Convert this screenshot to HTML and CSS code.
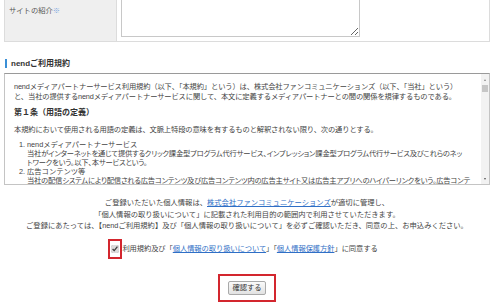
FILE: index.html
```html
<!DOCTYPE html>
<html lang="ja">
<head>
  <meta charset="UTF-8">
  <title>nendご利用規約</title>
  <link rel="stylesheet" href="styles.css">
</head>
<body>
<div class="page">

  <table class="formTable">
    <tr>
      <th>サイトの紹介<span class="req">※</span></th>
      <td><textarea class="siteText"></textarea></td>
    </tr>
  </table>

  <h2 class="sectionTitle">nendご利用規約</h2>

  <div class="termsBox">
    <div class="termsText">
      <p>nendメディアパートナーサービス利用規約（以下、「本規約」という）は、株式会社ファンコミュニケーションズ（以下、「当社」という）<br>と、当社の提供するnendメディアパートナーサービスに関して、本文に定義するメディアパートナーとの間の関係を規律するものである。</p>
      <h3>第１条（用語の定義）</h3>
      <p>本規約において使用される用語の定義は、文脈上特段の意味を有するものと解釈されない限り、次の通りとする。</p>
      <ol>
        <li>nendメディアパートナーサービス<br>
          <span class="desc">当社がインターネットを通じて提供するクリック課金型プログラム代行サービス、インプレッション課金型プログラム代行サービス及びこれらのネッ<br>トワークをいう。以下、本サービスという。</span></li>
        <li>広告コンテンツ等<br>
          <span class="desc">当社の配信システムにより配信される広告コンテンツ及び広告コンテンツ内の広告主サイト又は広告主アプリへのハイパーリンクをいう。広告コンテ<br>ンツ等には、テキスト、画像、動画等を含むものとする。</span></li>
      </ol>
    </div>
    <!-- 見た目だけのスクロールバー -->
    <div class="scrollBar">
      <span class="arrowUp"></span>
      <span class="thumb"></span>
      <span class="track"></span>
      <span class="arrowDown"></span>
    </div>
  </div>

  <div class="notice">
    <p>ご登録いただいた個人情報は、<a href="#">株式会社ファンコミュニケーションズ</a>が適切に管理し、</p>
    <p>「個人情報の取り扱いについて」に記載された利用目的の範囲内で利用させていただきます。</p>
    <p>ご登録にあたっては、【nendご利用規約】及び「個人情報の取り扱いについて」を必ずご確認いただき、同意の上、お申込みください。</p>
  </div>

  <div class="agree">
    <span class="mark"><input type="checkbox" checked></span>利用規約及び「<a href="#">個人情報の取り扱いについて</a>」「<a href="#">個人情報保護方針</a>」に同意する
  </div>

  <div class="submitRow">
    <span class="mark markButton"><button type="button">確認する</button></span>
  </div>

</div>
</body>
</html>
```

FILE: styles.css
```css
body {
    margin: 0;
    font-family: "Liberation Sans", "Noto Sans CJK JP", sans-serif;
    font-size: 7.3px;
    color: #444;
    background-color: #fff;
    overflow: hidden;
}

.page {
    width: 486px;
    margin-left: 4px;
}

a {
    color: #2f6fc6;
    text-decoration: underline;
}

/* フォームの表 */
.formTable {
    width: 486px;
    margin-top: -22px;
    border-collapse: collapse;
    border: 1px solid #dcdcdc;
}

.formTable th {
    width: 103px;
    padding: 0 4px;
    background-color: #efefef;
    border-right: 1px solid #dcdcdc;
    font-weight: normal;
    text-align: left;
    vertical-align: middle;
    color: #555;
}

.req {
    color: #79a6e0;
}

.formTable td {
    padding: 3px 4px 4px 4px;
}

.siteText {
    display: block;
    width: 239px;
    height: 55px;
    margin: 0;
    border: 1px solid #c8c8c8;
    box-sizing: border-box;
}

/* 見出し */
.sectionTitle {
    margin: 17px 0 5px 1px;
    padding-left: 4px;
    border-left: 2px solid #3a8fd6;
    font-size: 8px;
    line-height: 9px;
    font-weight: bold;
    color: #333;
}

/* 規約ボックス */
.termsBox {
    display: flex;
    height: 112px;
    border: 1px solid #c4c4c4;
    border-top-color: #9a9a9a;
    box-sizing: border-box;
}

.termsText {
    flex: 1;
    overflow: hidden;
    padding: 8px 10px 0 9px;
    line-height: 10px;
    white-space: nowrap;
}

.termsText p {
    margin: 0;
    letter-spacing: -0.15px;
}

.termsText h3 {
    margin: 6px 0 7px 0;
    font-size: 8px;
    line-height: 10px;
    font-weight: bold;
    color: #333;
}

.termsText ol {
    margin: 5px 0 0 0;
    padding-left: 13px;
    line-height: 9px;
}

.termsText li {
    margin-bottom: 0;
}

.desc {
    font-feature-settings: "palt";
    letter-spacing: -0.2px;
}

.scrollBar {
    width: 8px;
    display: flex;
    flex-direction: column;
    align-items: center;
    padding: 5px 0 4px 0;
    background-color: #f2f2f2;
}

.arrowUp, .arrowDown {
    width: 0;
    height: 0;
    border-left: 1.5px solid transparent;
    border-right: 1.5px solid transparent;
}

.arrowUp {
    border-bottom: 2px solid #888;
}

.arrowDown {
    border-top: 2px solid #555;
}

.thumb {
    width: 6px;
    height: 7px;
    margin-top: 4px;
    background-color: #c6c6c6;
}

.track {
    flex: 1;
}

/* お知らせ */
.notice {
    margin-top: 12px;
    text-align: center;
    line-height: 11.5px;
}

.notice p {
    margin: 0;
}

.agree {
    margin-top: 7px;
    padding-right: 8px;
    text-align: center;
    line-height: 20px;
    letter-spacing: -0.1px;
}

.mark {
    display: inline-block;
    vertical-align: top;
    border: 2px solid #d3262e;
    line-height: 0;
}

.agree .mark {
    padding: 4px 1px;
}

.agree input {
    width: 8px;
    height: 8px;
    margin: 0;
    accent-color: #dcdcdc;
}

.submitRow {
    margin-top: 15px;
    text-align: center;
}

.markButton {
    padding: 5px 8px;
}

.markButton button {
    height: 14px;
    padding: 0 3px;
    font-family: "Liberation Sans", "Noto Sans CJK JP", sans-serif;
    font-size: 7.3px;
    line-height: 12px;
    color: #333;
    background: linear-gradient(#fafafa, #e2e2e2);
    border: 1px solid #a9a9a9;
    border-radius: 2px;
}
```
